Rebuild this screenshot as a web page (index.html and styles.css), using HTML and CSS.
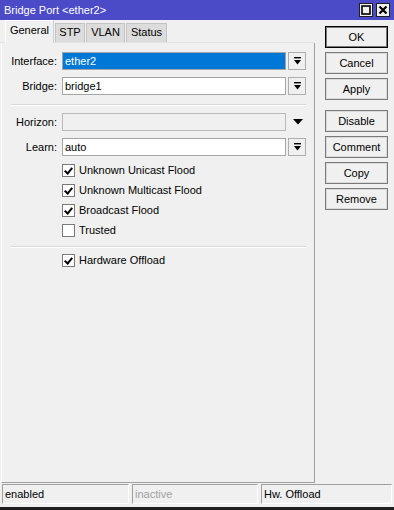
FILE: index.html
```html
<!DOCTYPE html>
<html lang="en">
<head>
    <meta charset="UTF-8">
    <title>Bridge Port &lt;ether2&gt;</title>
    <link rel="stylesheet" href="styles.css">
</head>
<body>
    <div class="window">
        <div class="titlebar">
            <span class="title">Bridge Port &lt;ether2&gt;</span>
            <div class="title-btns">
                <span class="tbtn">
                    <svg width="10" height="10" viewBox="0 0 10 10"><rect x="1" y="1" width="8" height="8" fill="none" stroke="#000" stroke-width="1.6"/></svg>
                </span>
                <span class="tbtn">
                    <svg width="10" height="10" viewBox="0 0 10 10"><path d="M1.5 1.5 L8.5 8.5 M8.5 1.5 L1.5 8.5" stroke="#000" stroke-width="2.2"/></svg>
                </span>
            </div>
        </div>

        <div class="main">
            <div class="left">
                <div class="tabs">
                    <div class="tab active">General</div>
                    <div class="tab">STP</div>
                    <div class="tab">VLAN</div>
                    <div class="tab">Status</div>
                </div>

                <div class="panel">
                    <div class="row first">
                        <span class="lbl">Interface:</span>
                        <div class="field selected">ether2</div>
                        <div class="drop">
                            <svg width="7" height="8" viewBox="0 0 7 8"><rect x="0" y="0" width="7" height="1.4" fill="#000"/><path d="M0 3 H7 L3.5 7.5 Z" fill="#000"/></svg>
                        </div>
                    </div>
                    <div class="row">
                        <span class="lbl">Bridge:</span>
                        <div class="field">bridge1</div>
                        <div class="drop">
                            <svg width="7" height="8" viewBox="0 0 7 8"><rect x="0" y="0" width="7" height="1.4" fill="#000"/><path d="M0 3 H7 L3.5 7.5 Z" fill="#000"/></svg>
                        </div>
                    </div>

                    <div class="sep"></div>

                    <div class="row">
                        <span class="lbl">Horizon:</span>
                        <div class="field disabled"></div>
                        <div class="arrow">
                            <svg width="10" height="6" viewBox="0 0 10 6"><path d="M0 0 H10 L5 5.5 Z" fill="#000"/></svg>
                        </div>
                    </div>
                    <div class="row">
                        <span class="lbl">Learn:</span>
                        <div class="field">auto</div>
                        <div class="drop">
                            <svg width="7" height="8" viewBox="0 0 7 8"><rect x="0" y="0" width="7" height="1.4" fill="#000"/><path d="M0 3 H7 L3.5 7.5 Z" fill="#000"/></svg>
                        </div>
                    </div>

                    <div class="checks">
                        <div class="check"><span class="box on"></span>Unknown Unicast Flood</div>
                        <div class="check"><span class="box on"></span>Unknown Multicast Flood</div>
                        <div class="check"><span class="box on"></span>Broadcast Flood</div>
                        <div class="check"><span class="box"></span>Trusted</div>
                    </div>

                    <div class="sep sep2"></div>

                    <div class="checks">
                        <div class="check"><span class="box on"></span>Hardware Offload</div>
                    </div>
                </div>
            </div>

            <div class="buttons">
                <button class="btn default">OK</button>
                <button class="btn">Cancel</button>
                <button class="btn">Apply</button>
                <button class="btn gap">Disable</button>
                <button class="btn">Comment</button>
                <button class="btn">Copy</button>
                <button class="btn">Remove</button>
            </div>
        </div>

        <div class="statusbar">
            <div class="stat s1">enabled</div>
            <div class="stat s2 dim">inactive</div>
            <div class="stat s3">Hw. Offload</div>
        </div>
    </div>
</body>
</html>
```

FILE: styles.css
```css
/* General Styling */
* {
    margin: 0;
    padding: 0;
    box-sizing: border-box;
}

body {
    font-family: 'Liberation Sans', Arial, sans-serif;
    font-size: 11px;
    color: #000;
    background: #f0f0f0;
    width: 394px;
    height: 510px;
    overflow: hidden;
}

.window {
    display: flex;
    flex-direction: column;
    height: 510px;
    border-bottom: 3px solid #1e1e1e;
}

/* Title bar */
.titlebar {
    height: 20px;
    background: #4b4bc8;
    color: #fff;
    display: flex;
    align-items: center;
    justify-content: space-between;
    padding-left: 4px;
    padding-right: 4px;
    font-size: 11px;
}

.title-btns {
    display: flex;
    gap: 3px;
}

.tbtn {
    width: 14px;
    height: 14px;
    background: #f0f0f0;
    border: 1px solid #1e1e1e;
    display: flex;
    align-items: center;
    justify-content: center;
}

/* Main area */
.main {
    display: flex;
    height: 463px;
}

.left {
    width: 315px;
    display: flex;
    flex-direction: column;
}

.tabs {
    height: 23px;
    display: flex;
    align-items: flex-end;
    padding-left: 5px;
    border-bottom: 1px solid #e3e3e3;
}

.tab {
    height: 19px;
    background: #dcdcdc;
    border: 1px solid #c4c4c4;
    border-bottom: none;
    line-height: 17px;
    margin-right: 1px;
    text-align: center;
}

.tab.active {
    background: #f0f0f0;
    border-color: #d0d0d0;
    border-left-color: #fff;
    border-top-color: #fff;
    line-height: 19px;
    position: relative;
    z-index: 1;
    margin-bottom: -1px;
    height: 23px;
}

.tab:nth-child(1) { width: 49px; }
.tab:nth-child(2) { width: 30px; }
.tab:nth-child(3) { width: 39px; }
.tab:nth-child(4) { width: 41px; }

.panel {
    margin-left: 1px;
    height: 440px;
    border-left: 1px solid #fff;
    border-right: 1px solid #a0a0a0;
    border-bottom: 1px solid #a0a0a0;
    padding-top: 9px;
}

.row {
    display: flex;
    align-items: center;
    height: 18px;
    margin-top: 7px;
}

.row.first {
    margin-top: 0;
}

.lbl {
    width: 55px;
    text-align: right;
    margin-right: 5px;
}

.field {
    width: 224px;
    height: 18px;
    background: #fff;
    border: 1px solid #a5a5a5;
    padding-left: 2px;
    line-height: 16px;
}

.field.selected {
    background: #0078d7;
    color: #fff;
}

.field.disabled {
    background: #f0f0f0;
    border-color: #b9b9b9;
}

.drop {
    width: 18px;
    height: 18px;
    margin-left: 2px;
    background: #f0f0f0;
    border: 1px solid #adadad;
    display: flex;
    align-items: center;
    justify-content: center;
}

.arrow {
    width: 18px;
    height: 18px;
    margin-left: 2px;
    display: flex;
    align-items: center;
    justify-content: center;
    padding-left: 2px;
}

.sep {
    margin: 9px 0 7px 9px;
    width: 295px;
    height: 2px;
    border-top: 1px solid #d9d9d9;
    border-bottom: 1px solid #fff;
}

.sep2 {
    margin-top: 6px;
    margin-bottom: 2px;
}

.checks {
    margin-top: 4px;
    padding-left: 60px;
}

.sep2 + .checks {
    margin-top: 0;
}

.check {
    height: 20px;
    display: flex;
    align-items: center;
}

.box {
    width: 13px;
    height: 13px;
    border: 1px solid #7a7a7a;
    background: #fff;
    margin-right: 4px;
    position: relative;
}

.box.on::after {
    content: "";
    position: absolute;
    left: 3px;
    top: 1px;
    width: 3px;
    height: 6px;
    border-right: 2px solid #000;
    border-bottom: 2px solid #000;
    transform: rotate(40deg);
}

/* Buttons */
.buttons {
    margin-left: 10px;
    width: 63px;
    padding-top: 6px;
    display: flex;
    flex-direction: column;
    gap: 4px;
}

.btn {
    height: 22px;
    width: 63px;
    font-family: 'Liberation Sans', Arial, sans-serif;
    font-size: 11px;
    font-weight: normal;
    color: #000;
    background: #f0f0f0;
    border: 1px solid #7a7a7a;
    box-shadow: inset 0 0 0 1px #dadada;
}

.btn.default {
    border-color: #000;
    box-shadow: inset 0 0 0 1px #7a7a7a;
}

.btn.gap {
    margin-top: 6px;
}

/* Status bar */
.statusbar {
    margin-top: 1px;
    height: 20px;
    display: flex;
    gap: 3px;
    padding-left: 2px;
}

.stat {
    height: 20px;
    border-top: 1px solid #a0a0a0;
    border-left: 1px solid #a0a0a0;
    border-right: 1px solid #fff;
    border-bottom: 1px solid #fff;
    padding-left: 2px;
    line-height: 18px;
}

.s1 { width: 127px; }
.s2 { width: 126px; }
.s3 { width: 131px; }

.dim {
    color: #a0a0a0;
}
```
